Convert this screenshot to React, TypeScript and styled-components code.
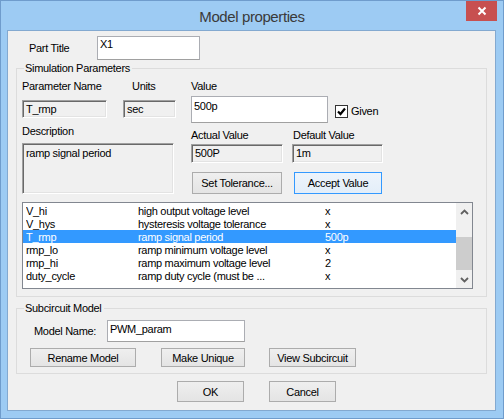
import styled, { createGlobalStyle } from "styled-components";

const GlobalStyle = createGlobalStyle`
  html, body {
    margin: 0;
    padding: 0;
  }
  body {
    font-family: "Liberation Sans", Arial, sans-serif;
    font-size: 11px;
    letter-spacing: -0.3px;
    color: #000;
  }
  * {
    box-sizing: border-box;
  }
`;

const Window = styled.div`
  width: 504px;
  height: 419px;
  background: #9dcbf3;
  border: 1px solid #6f9ccc;
  display: flex;
  flex-direction: column;
`;

const TitleBar = styled.div`
  height: 29px;
  position: relative;
  display: flex;
  align-items: center;
  justify-content: center;
  padding-top: 1px;
  font-family: "Liberation Sans", Arial, sans-serif;
  font-size: 15px;
  letter-spacing: -0.4px;
  color: #3a3a3a;
`;

const CloseButton = styled.div`
  position: absolute;
  top: 0;
  right: 6px;
  width: 31px;
  height: 20px;
  background: #c75050;
  display: flex;
  align-items: center;
  justify-content: center;
`;

const Client = styled.div`
  flex: 1;
  margin: 0 7px 7px 6px;
  border: 1px solid #83a9d0;
  background: #f0f0f0;
  display: flex;
  flex-direction: column;
`;

const PartRow = styled.div`
  display: flex;
  align-items: flex-start;
  margin-top: 5px;
  padding-left: 21px;
`;

const Label = styled.div<{ $w?: number; $ml?: number }>`
  line-height: 13px;
  height: 13px;
  white-space: nowrap;
  ${(p) => (p.$w ? `width: ${p.$w}px;` : "")}
  ${(p) => (p.$ml ? `margin-left: ${p.$ml}px;` : "")}
`;

const TextBox = styled.div<{ $w: number; $h: number; $pt?: number }>`
  width: ${(p) => p.$w}px;
  height: ${(p) => p.$h}px;
  background: #fff;
  border: 1px solid #abadb3;
  border-bottom-color: #a0a0a0;
  padding: ${(p) => p.$pt ?? 1}px 2px 0 2px;
  line-height: 13px;
  white-space: nowrap;
`;

const Sunken = styled.div<{ $w: number; $h: number; $top?: boolean }>`
  width: ${(p) => p.$w}px;
  height: ${(p) => p.$h}px;
  background: #f0f0f0;
  border-top: 1px solid #a0a0a0;
  border-left: 1px solid #a0a0a0;
  border-right: 1px solid #fff;
  border-bottom: 1px solid #fff;
  box-shadow: inset 1px 1px 0 #696969, inset -1px -1px 0 #e3e3e3;
  padding: ${(p) => (p.$top ? "3px" : "2px")} 2px 0 3px;
  line-height: 13px;
  white-space: nowrap;
`;

const Group = styled.div<{ $mt: number }>`
  position: relative;
  margin: ${(p) => p.$mt}px 0 0 8px;
  width: 471px;
  border: 1px solid #dcdcdc;
  display: flex;
  flex-direction: column;
`;

const Legend = styled.span`
  position: absolute;
  top: -7px;
  left: 7px;
  padding: 0 2px 0 1px;
  background: #f0f0f0;
  line-height: 13px;
`;

const SimBody = styled.div`
  padding: 11px 0 7px 5px;
  display: flex;
  flex-direction: column;
`;

const TopBlock = styled.div`
  display: flex;
  gap: 15px;
`;

const LeftCol = styled.div`
  width: 154px;
  display: flex;
  flex-direction: column;
`;

const RightCol = styled.div`
  display: flex;
  flex-direction: column;
`;

const FieldRow = styled.div<{ $mt?: number; $gap?: number }>`
  display: flex;
  gap: ${(p) => p.$gap ?? 0}px;
  margin-top: ${(p) => p.$mt ?? 0}px;
`;

const Field = styled.div<{ $gap: number; $ml?: number; $mt?: number }>`
  display: flex;
  flex-direction: column;
  gap: ${(p) => p.$gap}px;
  margin-left: ${(p) => p.$ml ?? 0}px;
  margin-top: ${(p) => p.$mt ?? 0}px;
`;

const ValueLine = styled.div`
  display: flex;
  align-items: center;
`;

const Given = styled.label`
  display: flex;
  align-items: center;
  gap: 3px;
  margin: 4px 0 0 7px;
  line-height: 13px;
`;

const CheckBox = styled.span`
  width: 13px;
  height: 13px;
  border: 1px solid #333;
  background: #fff;
  display: flex;
  align-items: center;
  justify-content: center;
`;

const Button = styled.div<{ $w: number; $h: number; $ml?: number; $focus?: boolean }>`
  width: ${(p) => p.$w}px;
  height: ${(p) => p.$h}px;
  margin-left: ${(p) => p.$ml ?? 0}px;
  border: 1px solid ${(p) => (p.$focus ? "#3399ff" : "#acacac")};
  background: ${(p) =>
    p.$focus
      ? "linear-gradient(#edf4fb, #e3eef9)"
      : "linear-gradient(#efefef, #e4e4e4)"};
  display: flex;
  align-items: center;
  justify-content: center;
  white-space: nowrap;
`;

const ButtonRow = styled.div<{ $mt: number; $pl?: number }>`
  display: flex;
  margin-top: ${(p) => p.$mt}px;
  padding-left: ${(p) => p.$pl ?? 0}px;
`;

const List = styled.div`
  margin-top: 8px;
  width: 451px;
  height: 87px;
  border: 1px solid #828790;
  background: #fff;
  display: flex;
`;

const Rows = styled.div`
  width: 433px;
  padding-top: 1px;
  display: flex;
  flex-direction: column;
`;

const Row = styled.div<{ $sel?: boolean }>`
  height: 13px;
  line-height: 14px;
  display: flex;
  padding-left: 3px;
  white-space: nowrap;
  background: ${(p) => (p.$sel ? "#3399ff" : "transparent")};
  color: ${(p) => (p.$sel ? "#fff" : "#000")};
`;

const Cell = styled.span<{ $w: number }>`
  width: ${(p) => p.$w}px;
  overflow: hidden;
`;

const ScrollBar = styled.div`
  width: 16px;
  background: #f0f0f0;
  display: flex;
  flex-direction: column;
`;

const ScrollArrow = styled.div`
  height: 17px;
  display: flex;
  align-items: center;
  justify-content: center;
`;

const Track = styled.div`
  flex: 1;
  display: flex;
  flex-direction: column;
`;

const Thumb = styled.div`
  margin-top: 17px;
  height: 33px;
  background: #cdcdcd;
`;

const SubBody = styled.div`
  padding: 11px 0 6px 13px;
  display: flex;
  flex-direction: column;
`;

const ModelRow = styled.div`
  display: flex;
  align-items: center;
  padding-left: 4px;
`;

const params = [
  { name: "V_hi", desc: "high output voltage level", val: "x" },
  { name: "V_hys", desc: "hysteresis voltage tolerance", val: "x" },
  { name: "T_rmp", desc: "ramp signal period", val: "500p", sel: true },
  { name: "rmp_lo", desc: "ramp minimum voltage level", val: "x" },
  { name: "rmp_hi", desc: "ramp maximum voltage level", val: "2" },
  { name: "duty_cycle", desc: "ramp duty cycle (must be ...", val: "x" },
];

function Chevron({ up }: { up?: boolean }) {
  return (
    <svg width="9" height="6" viewBox="0 0 9 6">
      <path
        d={up ? "M1 5 L4.5 1.5 L8 5" : "M1 1 L4.5 4.5 L8 1"}
        fill="none"
        stroke="#606060"
        strokeWidth="1.8"
      />
    </svg>
  );
}

export default function App() {
  return (
    <>
      <GlobalStyle />
      <Window>
        <TitleBar>
          Model properties
          <CloseButton>
            <svg width="10" height="10" viewBox="0 0 10 10">
              <path d="M1.5 1.5 L8.5 8.5 M8.5 1.5 L1.5 8.5" stroke="#fff" strokeWidth="2" />
            </svg>
          </CloseButton>
        </TitleBar>
        <Client>
          <PartRow>
            <Label $w={68} style={{ marginTop: 6 }}>Part Title</Label>
            <TextBox $w={103} $h={24}>X1</TextBox>
          </PartRow>

          <Group $mt={8}>
            <Legend>Simulation Parameters</Legend>
            <SimBody>
              <TopBlock>
                <LeftCol>
                  <FieldRow>
                    <Field $gap={7}>
                      <Label>Parameter Name</Label>
                      <Sunken $w={85} $h={18}>T_rmp</Sunken>
                    </Field>
                    <Field $gap={7} $ml={16}>
                      <Label $ml={9}>Units</Label>
                      <Sunken $w={53} $h={18}>sec</Sunken>
                    </Field>
                  </FieldRow>
                  <Field $gap={5} $mt={7}>
                    <Label>Description</Label>
                    <Sunken $w={152} $h={51} $top>ramp signal period</Sunken>
                  </Field>
                </LeftCol>
                <RightCol>
                  <Field $gap={3}>
                    <Label>Value</Label>
                    <ValueLine>
                      <TextBox $w={137} $h={27} $pt={3}>500p</TextBox>
                      <Given>
                        <CheckBox>
                          <svg width="11" height="11" viewBox="0 0 11 11">
                            <path d="M2 5.5 L4.5 8 L9 2.5" fill="none" stroke="#000" strokeWidth="2.2" />
                          </svg>
                        </CheckBox>
                        Given
                      </Given>
                    </ValueLine>
                  </Field>
                  <FieldRow $mt={6} $gap={9}>
                    <Field $gap={2}>
                      <Label>Actual Value</Label>
                      <Sunken $w={92} $h={19}>500P</Sunken>
                    </Field>
                    <Field $gap={2}>
                      <Label $ml={1}>Default Value</Label>
                      <Sunken $w={91} $h={19}>1m</Sunken>
                    </Field>
                  </FieldRow>
                  <ButtonRow $mt={9}>
                    <Button $w={90} $h={22} $ml={1}>Set Tolerance...</Button>
                    <Button $w={88} $h={22} $ml={12} $focus>Accept Value</Button>
                  </ButtonRow>
                </RightCol>
              </TopBlock>
              <List>
                <Rows>
                  {params.map((p) => (
                    <Row key={p.name} $sel={p.sel}>
                      <Cell $w={112}>{p.name}</Cell>
                      <Cell $w={187}>{p.desc}</Cell>
                      <Cell $w={100}>{p.val}</Cell>
                    </Row>
                  ))}
                </Rows>
                <ScrollBar>
                  <ScrollArrow>
                    <Chevron up />
                  </ScrollArrow>
                  <Track>
                    <Thumb />
                  </Track>
                  <ScrollArrow>
                    <Chevron />
                  </ScrollArrow>
                </ScrollBar>
              </List>
            </SimBody>
          </Group>

          <Group $mt={11}>
            <Legend>Subcircuit Model</Legend>
            <SubBody>
              <ModelRow>
                <Label $w={73}>Model Name:</Label>
                <TextBox $w={138} $h={22} $pt={2}>PWM_param</TextBox>
              </ModelRow>
              <ButtonRow $mt={6}>
                <Button $w={106} $h={19}>Rename Model</Button>
                <Button $w={84} $h={19} $ml={25}>Make Unique</Button>
                <Button $w={87} $h={19} $ml={24}>View Subcircuit</Button>
              </ButtonRow>
            </SubBody>
          </Group>

          <ButtonRow $mt={7} $pl={169}>
            <Button $w={67} $h={21}>OK</Button>
            <Button $w={67} $h={21} $ml={25}>Cancel</Button>
          </ButtonRow>
        </Client>
      </Window>
    </>
  );
}
